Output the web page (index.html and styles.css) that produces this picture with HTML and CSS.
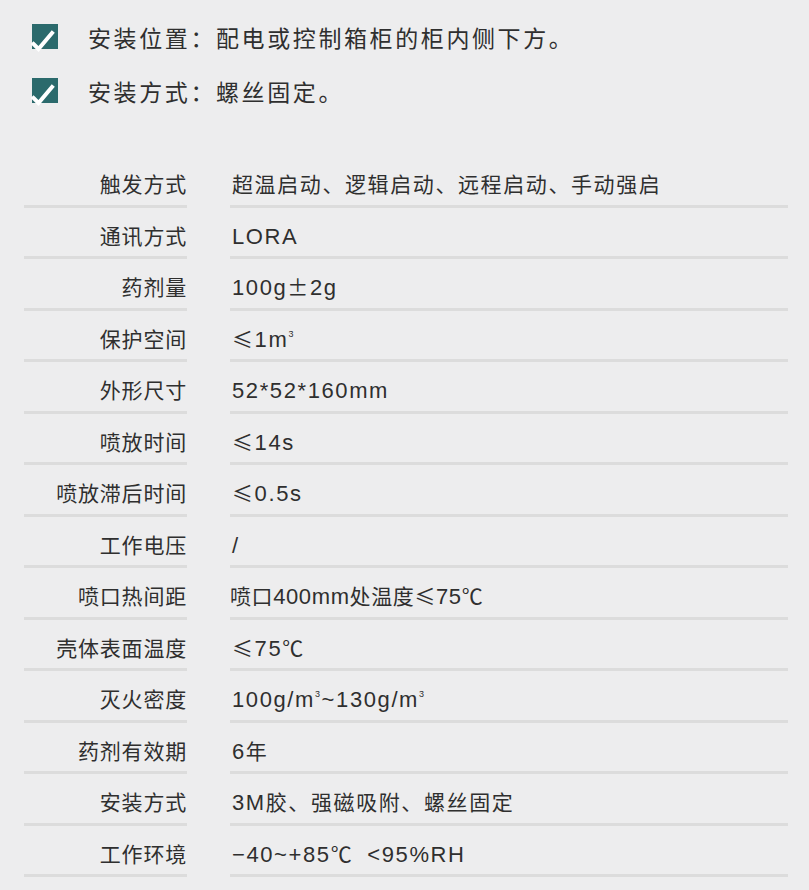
FILE: index.html
```html
<!DOCTYPE html>
<html lang="zh-CN">
<head>
<meta charset="utf-8">
<link rel="stylesheet" href="styles.css">
</head>
<body>
<div class="page">
  <ul class="checks">
    <li class="check-item">
      <svg class="check-icon" width="30" height="30" viewBox="0 0 30 30"><rect x="3" y="1" width="26" height="25" fill="#2b6a6c"/><path d="M4.5 21 L9.5 26 L23 10" fill="none" stroke="#fff" stroke-width="4" stroke-linecap="square"/></svg>
      <span>安装位置：配电或控制箱柜的柜内侧下方。</span>
    </li>
    <li class="check-item">
      <svg class="check-icon" width="30" height="30" viewBox="0 0 30 30"><rect x="3" y="1" width="26" height="25" fill="#2b6a6c"/><path d="M4.5 21 L9.5 26 L23 10" fill="none" stroke="#fff" stroke-width="4" stroke-linecap="square"/></svg>
      <span>安装方式：螺丝固定。</span>
    </li>
  </ul>
  <div class="specs">
    <div class="k">触发方式</div><div class="v">超温启动、逻辑启动、远程启动、手动强启</div>
    <div class="k">通讯方式</div><div class="v"><span class="en">LORA</span></div>
    <div class="k">药剂量</div><div class="v"><span class="en">100g</span><span class="sym">±</span><span class="en">2g</span></div>
    <div class="k">保护空间</div><div class="v"><span class="sym">≤</span><span class="en">1m<sup>3</sup></span></div>
    <div class="k">外形尺寸</div><div class="v"><span class="en">52*52*160mm</span></div>
    <div class="k">喷放时间</div><div class="v"><span class="sym">≤</span><span class="en">14s</span></div>
    <div class="k">喷放滞后时间</div><div class="v"><span class="sym">≤</span><span class="en">0.5s</span></div>
    <div class="k">工作电压</div><div class="v"><span class="en">/</span></div>
    <div class="k">喷口热间距</div><div class="v tight">喷口<span class="en">400mm</span>处温度<span class="sym">≤</span><span class="en">75</span>℃</div>
    <div class="k">壳体表面温度</div><div class="v"><span class="sym">≤</span><span class="en">75</span>℃</div>
    <div class="k">灭火密度</div><div class="v"><span class="en">100g/m<sup>3</sup>~130g/m<sup>3</sup></span></div>
    <div class="k">药剂有效期</div><div class="v"><span class="en">6</span>年</div>
    <div class="k">安装方式</div><div class="v"><span class="en">3M</span>胶、强磁吸附、螺丝固定</div>
    <div class="k">工作环境</div><div class="v"><span class="en">−40~+85</span>℃ <span class="en">&nbsp;&lt;95%RH</span></div>
  </div>
</div>
</body>
</html>
```

FILE: styles.css
```css
html, body {
  margin: 0;
  padding: 0;
  background: #ededee;
}
.page {
  width: 809px;
  height: 890px;
  overflow: hidden;
  font-family: "Noto Sans CJK SC", "Liberation Sans", sans-serif;
  color: #2f2f2f;
}
.checks {
  list-style: none;
  margin: 0;
  padding: 22px 0 0 29px;
  display: flex;
  flex-direction: column;
  gap: 24px;
}
.check-item {
  display: flex;
  align-items: center;
  height: 30px;
  font-size: 23px;
  letter-spacing: 2.6px;
}
.check-icon {
  flex: none;
  margin-right: 29px;
  margin-top: 2px;
}
.specs {
  display: grid;
  grid-template-columns: 163px 558px;
  column-gap: 43px;
  margin: 50px 0 0 24px;
  font-size: 21px;
}
.k, .v {
  line-height: 26px;
  padding-top: 14px;
  box-sizing: border-box;
  height: 51.5px;
  border-bottom: 3px solid #dcdcdc;
  white-space: nowrap;
}
.k {
  text-align: right;
  letter-spacing: 0.8px;
}
.v {
  padding-left: 2px;
  letter-spacing: 1.6px;
}
.v.tight { padding-left: 0; letter-spacing: 0.6px; }
.en {
  font-family: "Liberation Sans", sans-serif;
  font-size: 22px;
}
.sym {
  font-family: "Noto Sans CJK SC", sans-serif;
}
sup {
  font-size: 9px;
  vertical-align: 10px;
  line-height: 0;
}
```
